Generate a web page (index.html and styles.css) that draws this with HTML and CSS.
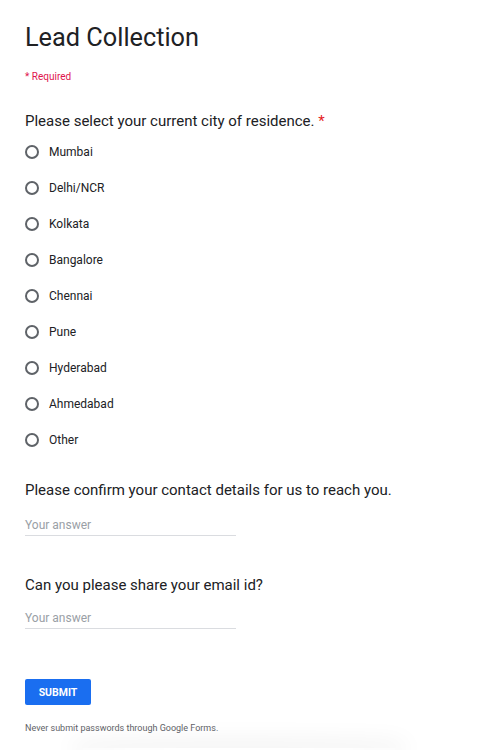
FILE: index.html
```html
<!DOCTYPE html>
<html>
<head>
<meta charset="utf-8">
<link rel="stylesheet" href="styles.css">
</head>
<body>
<div class="form">
  <h1 class="title">Lead Collection</h1>
  <div class="required">* Required</div>

  <div class="question q-city">
    <div class="q-title">Please select your current city of residence. <span class="star">*</span></div>
    <div class="options">
      <label class="option"><span class="radio"></span><span class="opt-label">Mumbai</span></label>
      <label class="option"><span class="radio"></span><span class="opt-label">Delhi/NCR</span></label>
      <label class="option"><span class="radio"></span><span class="opt-label">Kolkata</span></label>
      <label class="option"><span class="radio"></span><span class="opt-label">Bangalore</span></label>
      <label class="option"><span class="radio"></span><span class="opt-label">Chennai</span></label>
      <label class="option"><span class="radio"></span><span class="opt-label">Pune</span></label>
      <label class="option"><span class="radio"></span><span class="opt-label">Hyderabad</span></label>
      <label class="option"><span class="radio"></span><span class="opt-label">Ahmedabad</span></label>
      <label class="option"><span class="radio"></span><span class="opt-label">Other</span></label>
    </div>
  </div>

  <div class="question q-text">
    <div class="q-title">Please confirm your contact details for us to reach you.</div>
    <div class="answer">Your answer</div>
  </div>

  <div class="question q-text q-email">
    <div class="q-title">Can you please share your email id?</div>
    <div class="answer">Your answer</div>
  </div>

  <div class="submit-row">
    <button class="submit">SUBMIT</button>
  </div>
  <div class="footer-note">Never submit passwords through Google Forms.</div>
</div>
<div class="shadow"></div>
</body>
</html>
```

FILE: styles.css
```css
html, body {
  margin: 0;
  padding: 0;
  background: #ffffff;
}
body {
  font-family: Roboto, "Liberation Sans", Arial, sans-serif;
  color: #202124;
  position: relative;
  height: 750px;
  overflow: hidden;
}
.form {
  padding: 23px 25px 0 25px;
}
.title {
  margin: 0;
  font-size: 25.3px;
  font-weight: 400;
  line-height: 30px;
  color: #202124;
}
.required {
  margin-top: 18px;
  font-size: 10px;
  line-height: 12px;
  color: #e0134d;
}
.question {
  margin-top: 28px;
}
.q-title {
  font-size: 15px;
  line-height: 20px;
  color: #202124;
}
.star {
  color: #e51c23;
}
.options {
  margin-top: 3px;
  display: flex;
  flex-direction: column;
}
.option {
  display: flex;
  align-items: center;
  height: 36px;
}
.radio {
  box-sizing: border-box;
  width: 14px;
  height: 14px;
  border: 2px solid #5f6368;
  border-radius: 50%;
  margin: 0 10px 0 0;
  flex: none;
}
.opt-label {
  font-size: 12px;
  color: #202124;
}
.q-text {
  margin-top: 22px;
}
.q-email {
  margin-top: 39px;
}
.answer {
  margin-top: 17px;
  width: 211px;
  font-size: 12px;
  line-height: 16px;
  color: #9aa0a6;
  padding-bottom: 2px;
  border-bottom: 1px solid #dadce0;
}
.q-email .answer {
  margin-top: 15px;
}
.submit-row {
  margin-top: 50px;
}
.submit {
  width: 66px;
  height: 26px;
  background: #1a6ef0;
  color: #ffffff;
  border: none;
  border-radius: 2px;
  font-family: Roboto, "Liberation Sans", Arial, sans-serif;
  font-weight: 700;
  font-size: 10.5px;
  padding: 0;
}
.footer-note {
  margin-top: 18px;
  font-size: 9px;
  color: #5f6368;
}
.shadow {
  position: absolute;
  left: 80px;
  right: 80px;
  top: 748px;
  height: 2px;
  border-radius: 50%;
  box-shadow: 0 0 24px 8px rgba(0,0,0,0.06);
}
```
